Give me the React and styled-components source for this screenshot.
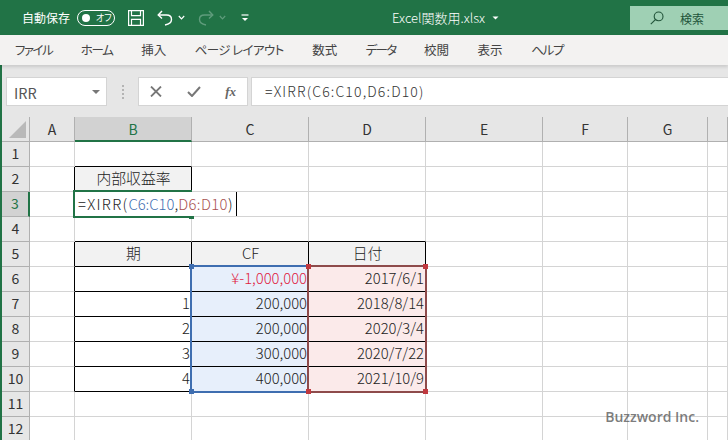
import React from 'react';
import styled, { createGlobalStyle } from 'styled-components';

const GlobalStyle = createGlobalStyle`
  html, body { margin: 0; padding: 0; background: #fff; }
  body { font-family: "Noto Sans CJK JP", "Noto Sans", sans-serif; font-feature-settings: "palt"; }
  * { box-sizing: border-box; }
`;

const Page = styled.div`
  width: 728px;
  height: 440px;
  overflow: hidden;
  display: flex;
  flex-direction: column;
`;

const TitleBar = styled.header`
  height: 35px;
  flex: none;
  background: #217346;
  color: #fff;
  display: flex;
  align-items: center;
  padding-left: 22px;
  position: relative;
`;

const AutoSave = styled.span`
  font-size: 12px;
  width: 55px;
  white-space: nowrap;
  font-feature-settings: normal;
`;

const Toggle = styled.span`
  width: 38px;
  height: 16px;
  border: 1px solid #fff;
  border-radius: 8px;
  display: flex;
  align-items: center;
  padding-left: 4px;
  gap: 6px;
  font-size: 9px;
  line-height: 1;
  margin-right: 13px;

  &::before {
    content: '';
    width: 8px;
    height: 8px;
    border-radius: 50%;
    background: #fff;
  }
`;

const QuickIcon = styled.svg`
  flex: none;
  margin-left: ${({ $gap }) => $gap || 0}px;
  fill: none;
  stroke: ${({ $dim }) => ($dim ? '#5f9c7c' : '#fff')};
  stroke-width: 1.2;
`;

const FileName = styled.span`
  font-size: 13px;
  margin-left: 143px;
  white-space: nowrap;
  font-weight: 300;
  font-feature-settings: normal;
`;

const SearchBox = styled.div`
  margin-left: auto;
  width: 98px;
  height: 24px;
  margin-top: 1px;
  background: #9fd0b4;
  color: #22543a;
  display: flex;
  align-items: center;
  padding-left: 20px;
  gap: 16px;
  font-size: 12px;
  font-feature-settings: normal;
`;

const RibbonTabs = styled.nav`
  height: 30px;
  flex: none;
  background: #f3f2f1;
  display: flex;
  align-items: center;
  padding: 0 0 2px 15px;
  gap: 28.5px;
  font-size: 12.5px;
  color: #444;
  box-shadow: 0 2px 3px rgba(0, 0, 0, 0.12);
  position: relative;
  z-index: 1;
`;

const Tab = styled.span`
  letter-spacing: ${({ $tight }) => $tight || 0}px;
  white-space: nowrap;
`;

const FormulaRow = styled.section`
  height: 52px;
  flex: none;
  background: #e6e6e6;
  border-left: 2px solid #217346;
  display: flex;
  padding: 12px 0 11px 4px;
`;

const NameBox = styled.div`
  width: 101px;
  background: #fff;
  border: 1px solid #d4d4d4;
  display: flex;
  align-items: center;
  justify-content: space-between;
  padding: 1px 6px 0 7px;
  font-size: 14.5px;
  color: #555;
`;

const NameArrow = styled.span`
  width: 0;
  height: 0;
  border-left: 4px solid transparent;
  border-right: 4px solid transparent;
  border-top: 4px solid #777;
`;

const Grip = styled.span`
  width: 31px;
  display: flex;
  flex-direction: column;
  align-items: center;
  justify-content: center;
  gap: 2px;

  i {
    width: 2px;
    height: 2px;
    background: #b4b4b4;
  }
`;

const FormulaButtons = styled.div`
  width: 110px;
  background: #fff;
  border: 1px solid #d4d4d4;
  display: flex;
  align-items: center;
  justify-content: space-between;
  padding: 0 11px 0 11px;
  margin-right: 3px;
`;

const FxLabel = styled.span`
  font-family: "Liberation Serif", serif;
  font-style: italic;
  font-weight: 700;
  font-size: 13px;
  color: #666;
`;

const FormulaInput = styled.div`
  flex: 1;
  background: #fff;
  border: 1px solid #d4d4d4;
  border-right: none;
  display: flex;
  align-items: center;
  padding: 0 0 2px 13px;
  font-size: 14px;
  font-weight: 300;
  letter-spacing: 1.15px;
  color: #333;
`;

const Sheet = styled.main`
  flex: 1;
  position: relative;
  overflow: hidden;
  border-left: 2px solid #217346;
  display: grid;
  grid-template-columns: 28px 45px 117px 117px 117px 117px 85px 80px 20px;
  grid-template-rows: repeat(13, 25px);
  font-size: 14px;
  color: #333;
`;

const Corner = styled.div`
  background: #e6e6e6;
  border-right: 1px solid #b0b0b0;
  border-bottom: 1px solid #b0b0b0;
  display: flex;
  align-items: flex-end;
  justify-content: flex-end;
  padding: 0 3px 3px 0;

  &::after {
    content: '';
    width: 0;
    height: 0;
    border-left: 17px solid transparent;
    border-bottom: 17px solid #b9b9b9;
  }
`;

const ColHead = styled.div`
  background: ${({ $active }) => ($active ? '#d2d2d2' : '#e6e6e6')};
  color: ${({ $active }) => ($active ? '#217346' : '#333')};
  border-right: 1px solid #b0b0b0;
  border-bottom: ${({ $active }) => ($active ? '2px solid #217346' : '1px solid #b0b0b0')};
  display: flex;
  align-items: center;
  justify-content: center;
`;

const RowHead = styled.div`
  background: ${({ $active }) => ($active ? '#d2d2d2' : '#e6e6e6')};
  color: ${({ $active }) => ($active ? '#217346' : '#333')};
  border-right: ${({ $active }) => ($active ? '2px solid #217346' : '1px solid #b0b0b0')};
  border-bottom: 1px solid #b0b0b0;
  padding-bottom: 2px;
  display: flex;
  align-items: center;
  justify-content: center;
`;

const Cell = styled.div`
  background: ${({ $fill }) => $fill || '#fff'};
  border-right: 1px solid ${({ $inkRight }) => ($inkRight ? '#000' : '#d4d4d4')};
  border-bottom: 1px solid ${({ $inkBottom }) => ($inkBottom ? '#000' : '#d4d4d4')};
  color: ${({ $red }) => ($red ? '#e0203e' : '#222')};
  display: flex;
  align-items: center;
  justify-content: ${({ $align }) => $align || 'flex-end'};
  padding: 0 1px 3px 2px;
  font-size: 14.8px;
  font-weight: 300;
  white-space: nowrap;
  overflow: hidden;
  font-feature-settings: normal;
`;

// セル編集中の枠(B3)
const EditBox = styled.div`
  position: absolute;
  left: 71px;
  top: 73px;
  width: 119px;
  height: 28px;
  border: 2px solid #217346;
  z-index: 3;

  &::after {
    content: '';
    position: absolute;
    right: -4px;
    bottom: -3px;
    width: 5px;
    height: 4px;
    background: #217346;
  }
`;

const EditText = styled.div`
  position: absolute;
  left: 74px;
  top: 75px;
  width: 161px;
  height: 24px;
  background: #fff;
  display: flex;
  align-items: center;
  padding: 0 0 2px 2px;
  font-size: 14.8px;
  font-weight: 300;
  white-space: nowrap;
  color: #222;
  z-index: 4;

  b { font-weight: 300; }
  .x { letter-spacing: 1.3px; }
  .c { color: #3f6eb0; }
  .d { color: #a8504f; letter-spacing: 0.4px; }

  &::after {
    content: '';
    position: absolute;
    right: 0;
    top: 0;
    width: 1px;
    height: 24px;
    background: #000;
  }
`;

const RangeBox = styled.div`
  position: absolute;
  top: 148px;
  left: ${({ $left }) => $left}px;
  width: ${({ $width }) => $width}px;
  height: 128px;
  border: 2px solid ${({ $line }) => $line};
  z-index: 2;
`;

const Handle = styled.span`
  position: absolute;
  width: 5px;
  height: 5px;
  background: ${({ $color }) => $color};
  ${({ $bottom }) => ($bottom ? 'bottom: -3px;' : 'top: -3px;')}
  ${({ $right }) => ($right ? 'right: -3px;' : 'left: -3px;')}
`;

const Watermark = styled.div`
  position: absolute;
  right: 29px;
  bottom: 13px;
  line-height: 20px;
  font-family: "Open Sans", sans-serif;
  font-weight: 600;
  font-size: 14px;
  color: rgba(90, 90, 90, 0.8);
  z-index: 5;
`;

const COLUMNS = ['A', 'B', 'C', 'D', 'E', 'F', 'G', ''];
const ROWS = [1, 2, 3, 4, 5, 6, 7, 8, 9, 10, 11, 12];

const CONTENT = {
  B2: { text: '内部収益率', align: 'center', fill: '#f2f2f2' },
  B5: { text: '期', align: 'center', fill: '#f2f2f2' },
  C5: { text: 'CF', align: 'center', fill: '#f2f2f2' },
  D5: { text: '日付', align: 'center', fill: '#f2f2f2' },
  B7: { text: '1' },
  B8: { text: '2' },
  B9: { text: '3' },
  B10: { text: '4' },
  C6: { text: '¥-1,000,000', red: true },
  C7: { text: '200,000' },
  C8: { text: '200,000' },
  C9: { text: '300,000' },
  C10: { text: '400,000' },
  D6: { text: '2017/6/1' },
  D7: { text: '2018/8/14' },
  D8: { text: '2020/3/4' },
  D9: { text: '2020/7/22' },
  D10: { text: '2021/10/9' },
};

// 罫線ありのセルかどうか
const isBoxed = (col, row) => {
  if (col === 'B' && row === 2) return true;
  return ['B', 'C', 'D'].includes(col) && row >= 5 && row <= 10;
};

const nextCol = (col) => COLUMNS[COLUMNS.indexOf(col) + 1];

const rangeFill = (col, row) => {
  if (row < 6 || row > 10) return undefined;
  if (col === 'C') return '#e7effb';
  if (col === 'D') return '#fbeaea';
  return undefined;
};

const TABS = [
  { label: 'ファイル', tight: -1.5 },
  { label: 'ホーム', tight: -1.3 },
  { label: '挿入' },
  { label: 'ページ レイアウト', tight: -0.6 },
  { label: '数式' },
  { label: 'データ', tight: -1.7 },
  { label: '校閲' },
  { label: '表示' },
  { label: 'ヘルプ', tight: -1.2 },
];

export default function App() {
  return (
    <Page>
      <GlobalStyle />
      <TitleBar>
        <AutoSave>自動保存</AutoSave>
        <Toggle>オフ</Toggle>
        <QuickIcon width="16" height="16" viewBox="0 0 16 16">
          <path d="M0.6 0.6h14.8v14.8H0.6z" />
          <path d="M3.5 0.6v5h9v-5M3.5 15.4v-6h9v6" />
        </QuickIcon>
        <QuickIcon width="16" height="16" viewBox="0 0 16 16" $gap={13}>
          <path d="M5 1 1.2 5 5 8.6" strokeWidth="1.4" />
          <path d="M1.4 5H9.5c3.4 0 5 2.2 5 4.4 0 2.4-2 4.6-6.5 5.6" strokeWidth="1.4" />
        </QuickIcon>
        <QuickIcon width="7" height="5" viewBox="0 0 7 5" $gap={5}>
          <path d="M0.8 1 3.5 3.8 6.2 1" />
        </QuickIcon>
        <QuickIcon width="16" height="16" viewBox="0 0 16 16" $gap={13} $dim>
          <path d="M11 1l3.8 4L11 8.6" strokeWidth="1.4" />
          <path d="M14.6 5H6.5c-3.4 0-5 2.2-5 4.4 0 2.4 2 4.6 6.5 5.6" strokeWidth="1.4" />
        </QuickIcon>
        <QuickIcon width="7" height="5" viewBox="0 0 7 5" $gap={5} $dim>
          <path d="M0.8 1 3.5 3.8 6.2 1" />
        </QuickIcon>
        <QuickIcon width="8" height="8" viewBox="0 0 8 8" $gap={15}>
          <path d="M0.5 1h7" />
          <path d="M1 4h6L4 7z" fill="#fff" stroke="none" />
        </QuickIcon>
        <FileName>Excel関数用.xlsx</FileName>
        <QuickIcon width="7" height="4" viewBox="0 0 7 4" $gap={7}>
          <path d="M0.5 0.5h6L3.5 3.5z" fill="#fff" stroke="none" />
        </QuickIcon>
        <SearchBox>
          <svg width="14" height="14" viewBox="0 0 14 14" fill="none" stroke="#22543a" strokeWidth="1.1">
            <circle cx="8.6" cy="5.4" r="4.4" />
            <path d="M5.4 8.6 0.8 13.2" />
          </svg>
          検索
        </SearchBox>
      </TitleBar>

      <RibbonTabs>
        {TABS.map((tab) => (
          <Tab key={tab.label} $tight={tab.tight}>
            {tab.label}
          </Tab>
        ))}
      </RibbonTabs>

      <FormulaRow>
        <NameBox>
          IRR
          <NameArrow />
        </NameBox>
        <Grip>
          <i />
          <i />
          <i />
          <i />
        </Grip>
        <FormulaButtons>
          <svg width="12" height="11" viewBox="0 0 12 11" stroke="#777" strokeWidth="1.8">
            <path d="M1 0.5 11 10.5M11 0.5 1 10.5" />
          </svg>
          <svg width="14" height="11" viewBox="0 0 14 11" fill="none" stroke="#777" strokeWidth="2">
            <path d="M1 6 5 10 13 1" />
          </svg>
          <FxLabel>fx</FxLabel>
        </FormulaButtons>
        <FormulaInput>=XIRR(C6:C10,D6:D10)</FormulaInput>
      </FormulaRow>

      <Sheet>
        <Corner />
        {COLUMNS.map((col) => (
          <ColHead key={col || 'rest'} $active={col === 'B'}>
            {col}
          </ColHead>
        ))}
        {ROWS.map((row) => (
          <React.Fragment key={row}>
            <RowHead $active={row === 3}>{row}</RowHead>
            {COLUMNS.map((col) => {
              const cell = CONTENT[col + row] || {};
              return (
                <Cell
                  key={col}
                  $align={cell.align}
                  $fill={cell.fill || rangeFill(col, row)}
                  $red={cell.red}
                  $inkRight={isBoxed(col, row) || isBoxed(nextCol(col), row)}
                  $inkBottom={isBoxed(col, row) || isBoxed(col, row + 1)}
                >
                  {cell.text}
                </Cell>
              );
            })}
          </React.Fragment>
        ))}

        <EditBox />
        <EditText>
          <span className="x">=XIRR(</span>
          <b className="c">C6:C10</b>,<b className="d">D6:D10</b>)
        </EditText>

        <RangeBox $left={188} $width={119} $line="#3f6eb0">
          <Handle $color="#3f6eb0" />
          <Handle $color="#3f6eb0" $bottom />
        </RangeBox>
        <RangeBox $left={305} $width={120} $line="#8e4b4b">
          <Handle $color="#c0393f" />
          <Handle $color="#c0393f" $right />
          <Handle $color="#c0393f" $bottom />
          <Handle $color="#c0393f" $bottom $right />
        </RangeBox>

        <Watermark>Buzzword Inc.</Watermark>
      </Sheet>
    </Page>
  );
}
